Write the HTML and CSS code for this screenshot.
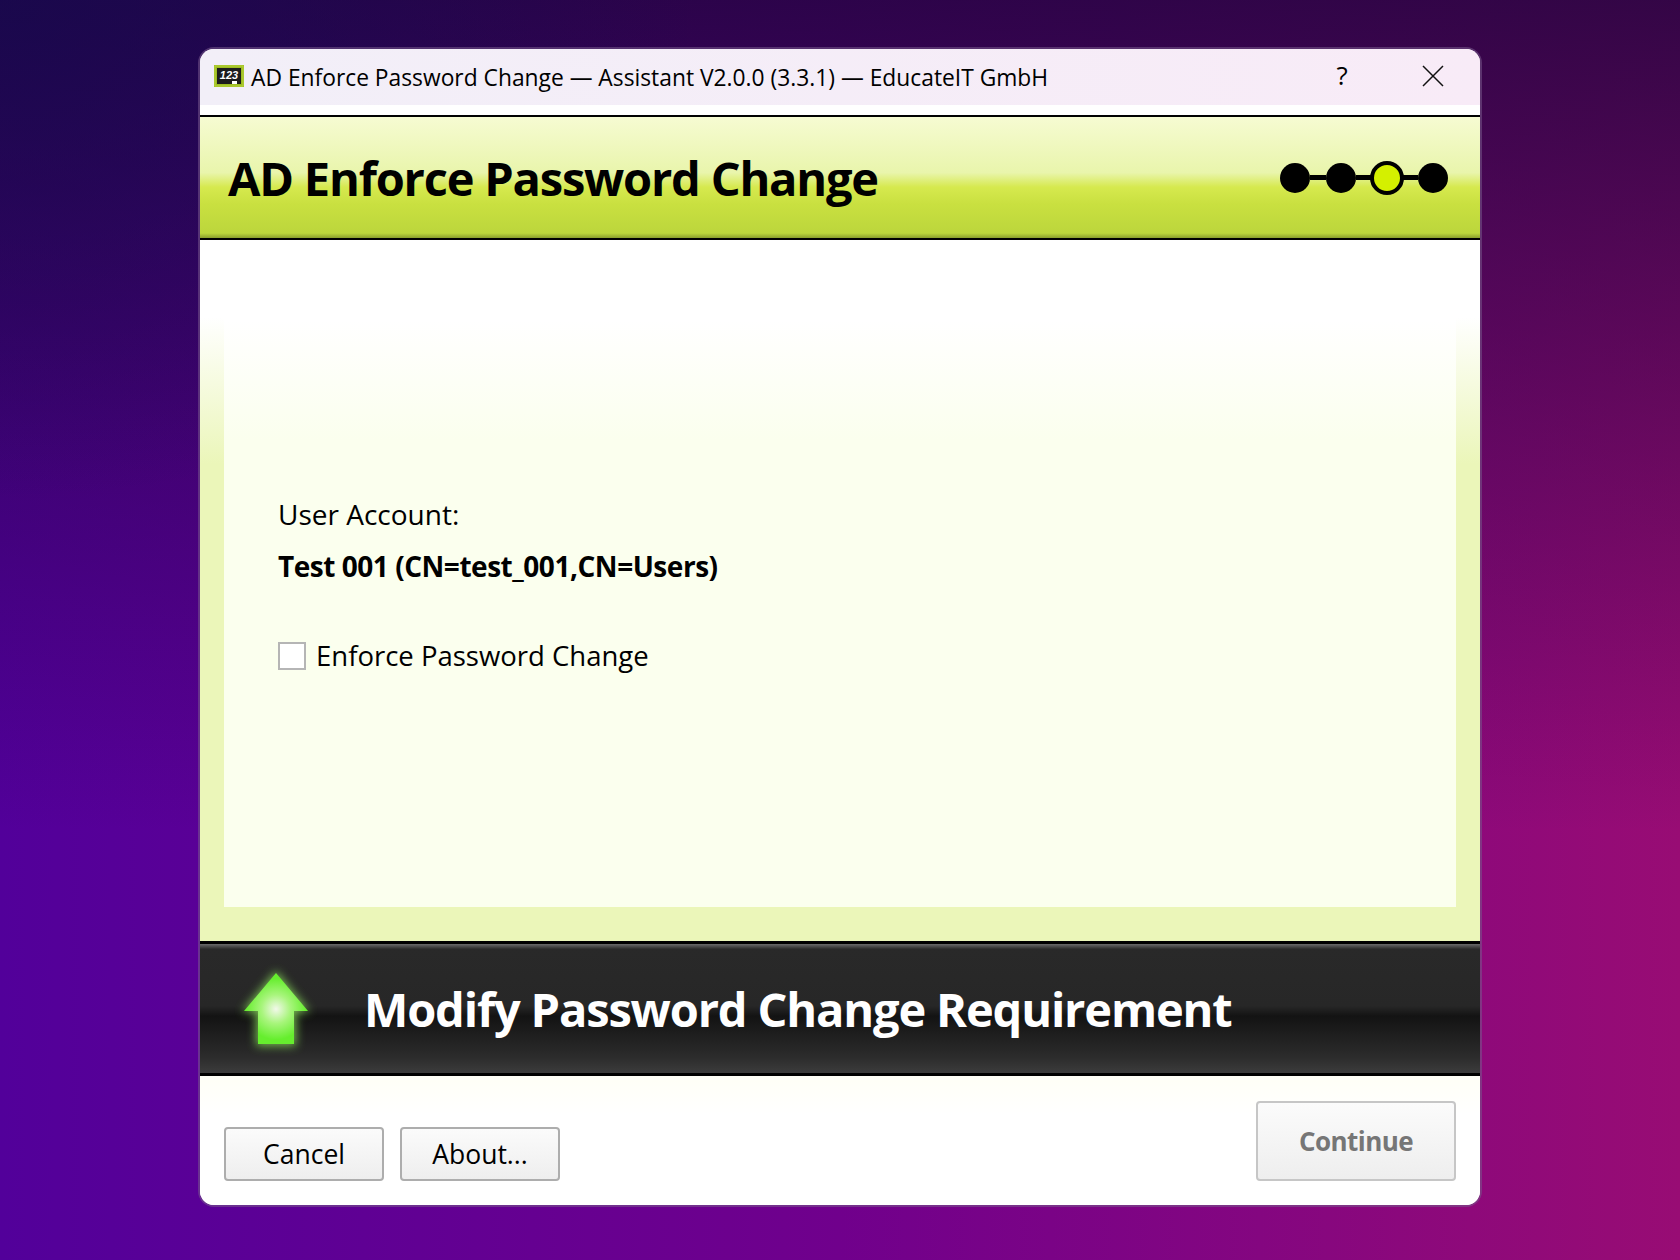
FILE: index.html
```html
<!DOCTYPE html>
<html>
    <head>
        <meta charset="UTF-8">
        <title>AD Enforce Password Change</title>
        <link rel="stylesheet" href="styles.css">
    </head>
    <body>
        <div class="window">
            <div class="titlebar">
                <svg class="app-icon" width="30" height="24" viewBox="0 0 30 24">
                    <rect x="0" y="1" width="30" height="22" fill="#9cbc22"/>
                    <rect x="1" y="2" width="28" height="20" fill="none" stroke="#b7d43a" stroke-width="1"/>
                    <rect x="3" y="4" width="24" height="16" fill="#1c1c1c"/>
                    <text x="15" y="15" class="app-icon-text">123</text>
                    <rect x="18" y="17" width="5" height="3" fill="#ffffff"/>
                </svg>
                <span class="title-text">AD Enforce Password Change — Assistant V2.0.0 (3.3.1) — EducateIT GmbH</span>
                <span class="title-help">?</span>
                <svg class="title-close" width="22" height="22" viewBox="0 0 22 22">
                    <path d="M1 1 L21 21 M21 1 L1 21" stroke="#111111" stroke-width="1.5" fill="none"/>
                </svg>
            </div>
            <div class="title-gap"></div>
            <div class="header">
                <h1>AD Enforce Password Change</h1>
                <div class="steps">
                    <span class="step"></span>
                    <span class="step-line"></span>
                    <span class="step"></span>
                    <span class="step-line"></span>
                    <span class="step step-current"></span>
                    <span class="step-line"></span>
                    <span class="step"></span>
                </div>
            </div>
            <div class="content">
                <div class="panel">
                    <div class="label">User Account:</div>
                    <div class="account">Test 001 (CN=test_001,CN=Users)</div>
                    <label class="check-row">
                        <span class="checkbox"></span>
                        <span>Enforce Password Change</span>
                    </label>
                </div>
            </div>
            <div class="banner">
                <svg class="arrow" width="100" height="100" viewBox="0 0 100 100">
                    <defs>
                        <radialGradient id="arrowFill" cx="50" cy="50" r="36" gradientUnits="userSpaceOnUse">
                            <stop offset="0" stop-color="#f2f8ea"/>
                            <stop offset="0.4" stop-color="#a8f57c"/>
                            <stop offset="0.85" stop-color="#66ee2e"/>
                        </radialGradient>
                        <filter id="arrowGlow" x="-40%" y="-40%" width="180%" height="180%">
                            <feGaussianBlur stdDeviation="5"/>
                        </filter>
                    </defs>
                    <path d="M50 12 L84 53 L70 53 L70 87 L30 87 L30 53 L16 53 Z" fill="#8ae05a" opacity="0.8" filter="url(#arrowGlow)"/>
                    <path d="M50 14 L82 52 L68 52 L68 85 L32 85 L32 52 L18 52 Z" fill="url(#arrowFill)"/>
                </svg>
                <h2>Modify Password Change Requirement</h2>
            </div>
            <div class="footer">
                <button class="btn">Cancel</button>
                <button class="btn">About...</button>
                <button class="btn btn-continue" disabled>Continue</button>
            </div>
        </div>
    </body>
</html>
```

FILE: styles.css
```css
html, body {
    height: 100%;
}

body {
    margin: 0;
    height: 1260px;
    box-sizing: border-box;
    padding-top: 49px;
    overflow: hidden;
    font-family: "Open Sans", "Noto Sans", sans-serif;
    color: #000000;
    background-color: #4a0090;
    background-image:
        radial-gradient(700px 500px at 0% 0%, rgba(20, 10, 76, 0.7) 0%, rgba(20, 10, 76, 0) 100%),
        linear-gradient(180deg, rgba(30, 4, 60, 0.82) 0%, rgba(30, 4, 60, 0) 66%),
        linear-gradient(90deg, #52009a 0%, #70008c 50%, #980c74 100%);
}

.window {
    width: 1280px;
    height: 1156px;
    margin: 0 auto;
    display: flex;
    flex-direction: column;
    background-color: #ffffff;
    border-radius: 14px;
    box-shadow: 0 0 0 2px rgba(120, 90, 140, 0.55);
    overflow: hidden;
}

.titlebar {
    height: 56px;
    display: flex;
    align-items: center;
    padding-left: 14px;
    background: linear-gradient(90deg, #f2eff8 0%, #f8ebf7 100%);
    font-size: 22.8px;
    flex: none;
}

.app-icon {
    margin-right: 7px;
    margin-top: -3px;
}

.app-icon-text {
    font-family: "Liberation Sans", sans-serif;
    font-size: 11px;
    font-weight: bold;
    font-style: italic;
    fill: #ffffff;
    text-anchor: middle;
}

.title-text {
    flex: 1;
    white-space: nowrap;
}

.title-help {
    width: 24px;
    text-align: center;
    margin-right: 68px;
    margin-top: -4px;
    font-size: 26px;
}

.title-close {
    margin-right: 36px;
    margin-top: -2px;
}

.title-gap {
    height: 10px;
    background-color: #ffffff;
    border-bottom: 2px solid #000000;
    flex: none;
}

.header {
    height: 121px;
    flex: none;
    display: flex;
    align-items: center;
    justify-content: space-between;
    padding: 0 32px 0 28px;
    background: linear-gradient(180deg, #f6fbd2 0%, #e9f5ac 46%, #d6e94e 58%, #c9e040 72%, #bcd63c 96%, #8a9e2c 100%);
    border-bottom: 2px solid #000000;
}

.header h1 {
    margin: 0;
    font-size: 47px;
    font-weight: 700;
    letter-spacing: -1.2px;
}

.steps {
    display: flex;
    align-items: center;
}

.step {
    width: 30px;
    height: 30px;
    border-radius: 50%;
    background-color: #000000;
    flex: none;
}

.step-line {
    width: 16px;
    height: 5px;
    background-color: #000000;
    flex: none;
}

.step-current {
    box-sizing: border-box;
    width: 34px;
    height: 34px;
    margin: 0 -2px;
    background-color: #d4f000;
    border: 4px solid #000000;
}

.content {
    height: 701px;
    flex: none;
    box-sizing: border-box;
    padding: 0 24px 34px;
    background: linear-gradient(180deg, #ffffff 0%, #ffffff 11%, #ebf6b9 32%, #ebf6b9 100%);
    display: flex;
}

.panel {
    flex: 1;
    padding: 22px 55px 0 54px;
    display: flex;
    flex-direction: column;
    justify-content: center;
    background: linear-gradient(180deg, #ffffff 0%, #ffffff 12%, #fbffee 30%, #fbffee 100%);
    font-size: 27.5px;
}

.label {
    font-size: 28px;
    margin-bottom: 14px;
}

.account {
    font-size: 28px;
    font-weight: 700;
    letter-spacing: -0.47px;
    margin-bottom: 52px;
}

.check-row {
    display: flex;
    align-items: center;
    gap: 10px;
}

.checkbox {
    width: 24px;
    height: 24px;
    background-color: #ffffff;
    border: 2px solid #b5b5b5;
}

.banner {
    height: 129px;
    flex: none;
    display: flex;
    align-items: center;
    padding-left: 26px;
    border-top: 3px solid #000000;
    border-bottom: 3px solid #000000;
    background: linear-gradient(180deg, #6a6a6a 0%, #292929 4%, #272727 48%, #131313 56%, #1b1b1b 66%, #2c2c2c 88%, #3c3c3c 100%);
}

.arrow {
    flex: none;
    margin-right: 38px;
}

.banner h2 {
    margin: 0;
    color: #ffffff;
    font-size: 47px;
    font-weight: 700;
    letter-spacing: -1.15px;
}

.footer {
    flex: 1;
    display: flex;
    align-items: flex-end;
    gap: 16px;
    padding: 0 24px 24px;
    background: linear-gradient(180deg, #fffff6 0%, #ffffff 30%);
}

.btn {
    width: 160px;
    height: 54px;
    box-sizing: border-box;
    border: 2px solid #adadad;
    border-radius: 4px;
    background: linear-gradient(180deg, #fbfbfb 0%, #eeeeee 100%);
    font-family: inherit;
    font-size: 26.5px;
    color: #000000;
    padding: 0;
}

.btn-continue {
    width: 200px;
    height: 80px;
    margin-left: auto;
    border-color: #c6c6c6;
    font-size: 26px;
    font-weight: 700;
    letter-spacing: -0.55px;
    color: #767676;
}
```
